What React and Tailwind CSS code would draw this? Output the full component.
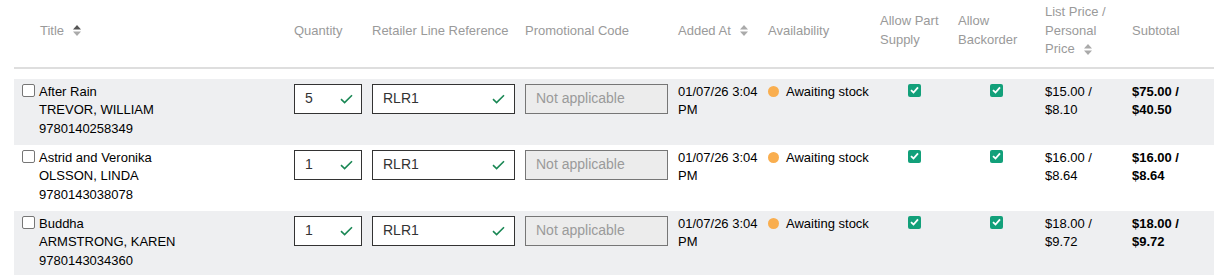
import React from "react";

const cols = "grid grid-cols-[275px_78px_153px_153px_90px_112px_78px_87px_87px_87px]";

function SortIcon({ topDark }) {
  return (
    <svg width="8" height="11" viewBox="0 0 8 11" className="ml-[9px] shrink-0">
      <path d="M0 4.5 L4 0 L8 4.5 Z" fill={topDark ? "#555" : "#aaa"} />
      <path d="M0 6.5 L4 11 L8 6.5 Z" fill="#aaa" />
    </svg>
  );
}

function Tick() {
  return (
    <svg width="13" height="10" viewBox="0 0 13 10">
      <path d="M1 5.2 L4.6 8.6 L12 1.2" fill="none" stroke="#198754" strokeWidth="1.6" />
    </svg>
  );
}

function GreenBox() {
  return (
    <span className="inline-flex h-[13px] w-[13px] items-center justify-center rounded-[2px] bg-[#12a07a]">
      <svg width="9" height="8" viewBox="0 0 9 8">
        <path d="M1 4.2 L3.5 6.5 L8 1.3" fill="none" stroke="#fff" strokeWidth="1.8" />
      </svg>
    </span>
  );
}

const rows = [
  { title: "After Rain", author: "TREVOR, WILLIAM", isbn: "9780140258349", qty: "5", list: "$15.00 /", personal: "$8.10", sub1: "$75.00 /", sub2: "$40.50", bg: "bg-[#eeeff1]" },
  { title: "Astrid and Veronika", author: "OLSSON, LINDA", isbn: "9780143038078", qty: "1", list: "$16.00 /", personal: "$8.64", sub1: "$16.00 /", sub2: "$8.64", bg: "bg-white" },
  { title: "Buddha", author: "ARMSTRONG, KAREN", isbn: "9780143034360", qty: "1", list: "$18.00 /", personal: "$9.72", sub1: "$18.00 /", sub2: "$9.72", bg: "bg-[#eeeff1]" },
];

export default function App() {
  return (
    <div className="min-h-[275px] bg-white text-[13px] leading-[18.57px] text-black" style={{ fontFamily: '"Liberation Sans", Arial, sans-serif' }}>
      <div className="ml-[14px] w-[1200px]">
        <div className={`${cols} items-center border-b-2 border-[#dedede] pt-[3px] pb-[8px] text-[#9a9a9a]`}>
          <div className="flex items-center pl-[26px]">
            <span>Title</span>
            <SortIcon topDark />
          </div>
          <div className="px-[5px]">Quantity</div>
          <div className="px-[5px]">Retailer Line Reference</div>
          <div className="px-[5px]">Promotional Code</div>
          <div className="flex items-center px-[5px]">
            <span>Added At</span>
            <SortIcon />
          </div>
          <div className="px-[5px]">Availability</div>
          <div className="px-[5px]">Allow Part Supply</div>
          <div className="px-[5px]">Allow Backorder</div>
          <div className="px-[5px]">
            List Price / Personal <span className="inline-flex items-center">Price<SortIcon /></span>
          </div>
          <div className="px-[5px]">Subtotal</div>
        </div>
        <div className="mt-[10px]">
          {rows.map((r) => (
            <div key={r.isbn} className={`${cols} h-[66px] items-start pt-[4px] ${r.bg}`}>
              <div className="flex items-start pl-[8px]">
                <span className="mt-[1px] mr-[4px] h-[13px] w-[13px] shrink-0 rounded-[2px] border border-[#767676] bg-white" />
                <div>
                  <div>{r.title}</div>
                  <div>{r.author}</div>
                  <div>{r.isbn}</div>
                </div>
              </div>
              <div className="px-[5px] pt-[1px]">
                <div className="flex h-[30px] w-[68px] items-center justify-between border border-[#333] bg-white pl-[10px] pr-[8px] text-[14px] text-[#333]">
                  <span>{r.qty}</span>
                  <Tick />
                </div>
              </div>
              <div className="px-[5px] pt-[1px]">
                <div className="flex h-[30px] w-[143px] items-center justify-between border border-[#333] bg-white pl-[10px] pr-[9px] text-[14px] text-[#333]">
                  <span>RLR1</span>
                  <Tick />
                </div>
              </div>
              <div className="px-[5px] pt-[1px]">
                <div className="flex h-[30px] w-[143px] items-center border border-[#767676] bg-[#ececec] pl-[10px] text-[14px] text-[#9a9a9a]">
                  Not applicable
                </div>
              </div>
              <div className="pl-[5px] pr-[4px]">01/07/26 3:04 PM</div>
              <div className="flex items-center px-[5px]">
                <span className="mr-[7px] h-[11px] w-[11px] shrink-0 rounded-full bg-[#f9ae4f]" />
                <span>Awaiting stock</span>
              </div>
              <div className="flex justify-center px-[5px] pt-[1px]">
                <GreenBox />
              </div>
              <div className="flex justify-center px-[5px] pt-[1px]">
                <GreenBox />
              </div>
              <div className="px-[5px]">
                <div>{r.list}</div>
                <div>{r.personal}</div>
              </div>
              <div className="px-[5px] font-bold">
                <div>{r.sub1}</div>
                <div>{r.sub2}</div>
              </div>
            </div>
          ))}
        </div>
      </div>
    </div>
  );
}
